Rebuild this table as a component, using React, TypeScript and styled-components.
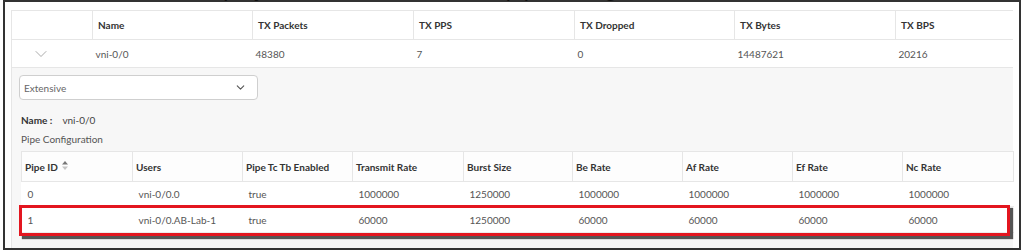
import styled, { createGlobalStyle } from 'styled-components';
import { ChevronDown } from 'lucide-react';

const GlobalStyle = createGlobalStyle`
  body {
    margin: 0;
    background: #fff;
    font-family: Lato, "Open Sans", sans-serif;
  }
`;

const outerCols = [81, 160, 161, 161, 160, 161, 117];
const outerHead = ['', 'Name', 'TX Packets', 'TX PPS', 'TX Dropped', 'TX Bytes', 'TX BPS'];
const outerRow = ['vni-0/0', '48380', '7', '0', '14487621', '20216'];

const pipeCols = [111, 110, 110, 111, 109, 110, 110, 110, 111];
const pipeHead = [
  'Pipe ID',
  'Users',
  'Pipe Tc Tb Enabled',
  'Transmit Rate',
  'Burst Size',
  'Be Rate',
  'Af Rate',
  'Ef Rate',
  'Nc Rate',
];
const pipeRows = [
  ['0', 'vni-0/0.0', 'true', '1000000', '1250000', '1000000', '1000000', '1000000', '1000000'],
  ['1', 'vni-0/0.AB-Lab-1', 'true', '60000', '1250000', '60000', '60000', '60000', '60000'],
];

const SortIcon = () => (
  <svg width="6" height="9" viewBox="0 0 6 9" style={{ marginLeft: 4, verticalAlign: '1px' }}>
    <path d="M3 0 L6 3.5 L0 3.5 Z" fill="#777" />
    <path d="M3 9 L6 5.5 L0 5.5 Z" fill="#c4c4c4" />
  </svg>
);

const App = () => {
  return (
    <>
      <GlobalStyle />
      <CaptionClip>
        <Caption>Display of the Extensive mode pipe configuration</Caption>
      </CaptionClip>
      <Frame>
        <OuterTable>
          <colgroup>
            {outerCols.map((w, i) => (
              <col key={i} style={{ width: w }} />
            ))}
          </colgroup>
          <thead>
            <tr>
              {outerHead.map((h, i) => (
                <OuterTh key={i}>{h}</OuterTh>
              ))}
            </tr>
          </thead>
          <tbody>
            <tr>
              <OuterTd>
                <Expander>
                  <ChevronDown size={20} strokeWidth={1} color="#9a9a9a" />
                </Expander>
              </OuterTd>
              {outerRow.map((v, i) => (
                <OuterTd key={i}>{v}</OuterTd>
              ))}
            </tr>
            <tr>
              <PanelCell colSpan={7}>
                <SelectBox>
                  <span>Extensive</span>
                  <ChevronDown size={13} strokeWidth={2} color="#555" />
                </SelectBox>
                <NameLine>
                  <NameLabel>Name :</NameLabel>
                  <span>vni-0/0</span>
                </NameLine>
                <SectionTitle>Pipe Configuration</SectionTitle>
                <TableWrap>
                  <PipeTable>
                    <colgroup>
                      {pipeCols.map((w, i) => (
                        <col key={i} style={{ width: w }} />
                      ))}
                    </colgroup>
                    <thead>
                      <tr>
                        {pipeHead.map((h, i) => (
                          <PipeTh key={i}>
                            {h}
                            {i === 0 && <SortIcon />}
                          </PipeTh>
                        ))}
                      </tr>
                    </thead>
                    <tbody>
                      {pipeRows.map((r, ri) => (
                        <PipeTr key={ri} $tall={ri === 1}>
                          {r.map((v, i) => (
                            <PipeTd key={i}>{v}</PipeTd>
                          ))}
                        </PipeTr>
                      ))}
                    </tbody>
                  </PipeTable>
                  <Highlight />
                </TableWrap>
              </PanelCell>
            </tr>
          </tbody>
        </OuterTable>
      </Frame>
    </>
  );
};

// only the descenders of the cut-off caption line show above the frame
const CaptionClip = styled.div`
  position: relative;
  z-index: 1;
  height: 3px;
  overflow: hidden;
  padding-left: 190px;
`;

const Caption = styled.div`
  font-family: "Liberation Sans", Arial, sans-serif;
  font-size: 23px;
  line-height: 23px;
  margin-top: -23px;
  color: #111;
  white-space: nowrap;
`;

const Frame = styled.div`
  box-sizing: border-box;
  margin-top: -3px;
  margin-left: 3px;
  width: 1018px;
  height: 250px;
  border: 2px solid #333;
  padding: 8px 0 0 6px;
`;

const OuterTable = styled.table`
  table-layout: fixed;
  border-collapse: collapse;
  width: 1001px;
  font-size: 10px;
`;

const OuterTh = styled.th`
  height: 28px;
  padding: 0 5px;
  text-align: left;
  font-weight: 700;
  color: #333;
  background: #fff;
  border: 1px solid #e6e6e6;
  &:last-child {
    border-right: none;
  }
`;

const OuterTd = styled.td`
  height: 27px;
  padding: 0 3px;
  color: #555;
  border-bottom: 1px solid #e6e6e6;
  &:first-child {
    border-left: 1px solid #e6e6e6;
  }
`;

const Expander = styled.span`
  display: flex;
  padding-left: 16px;
  margin-top: 1px;
`;

const PanelCell = styled.td`
  height: 173px;
  padding: 7px 0 0 7px;
  vertical-align: top;
  background: #f7f7f7;
  border-left: 1px solid #e6e6e6;
`;

const SelectBox = styled.div`
  box-sizing: border-box;
  width: 239px;
  height: 25px;
  display: flex;
  align-items: center;
  justify-content: space-between;
  padding: 0 10px 0 4px;
  background: #fff;
  border: 1px solid #cfcfcf;
  border-radius: 4px;
  font-size: 10px;
  color: #666;
`;

const NameLine = styled.div`
  margin-top: 14px;
  padding-left: 2px;
  font-size: 10px;
  line-height: 12px;
  color: #444;
`;

const NameLabel = styled.span`
  font-weight: 700;
  color: #333;
  margin-right: 10px;
`;

const SectionTitle = styled.div`
  margin-top: 7px;
  padding-left: 2px;
  font-size: 10px;
  line-height: 12px;
  color: #555;
`;

const TableWrap = styled.div`
  position: relative;
  margin-top: 6px;
  margin-left: 2px;
  width: 992px;
`;

const PipeTable = styled.table`
  table-layout: fixed;
  border-collapse: collapse;
  width: 992px;
  font-size: 10px;
  background: #fff;
`;

const PipeTh = styled.th`
  height: 29px;
  padding: 0 3px;
  text-align: left;
  font-weight: 700;
  color: #333;
  background: #fdfdfd;
  border: 1px solid #e6e6e6;
`;

const PipeTr = styled.tr<{ $tall?: boolean }>`
  height: ${(p) => (p.$tall ? 26 : 25)}px;
`;

const PipeTd = styled.td`
  padding: 0 6px;
  color: #555;
  border-bottom: 1px solid #ececec;
`;

const Highlight = styled.div`
  position: absolute;
  top: 54px;
  left: -2px;
  width: 991px;
  height: 31px;
  box-sizing: border-box;
  border: 3px solid #e3161f;
  box-shadow: 3px 3px 1px #555;
  pointer-events: none;
`;

export default App;
